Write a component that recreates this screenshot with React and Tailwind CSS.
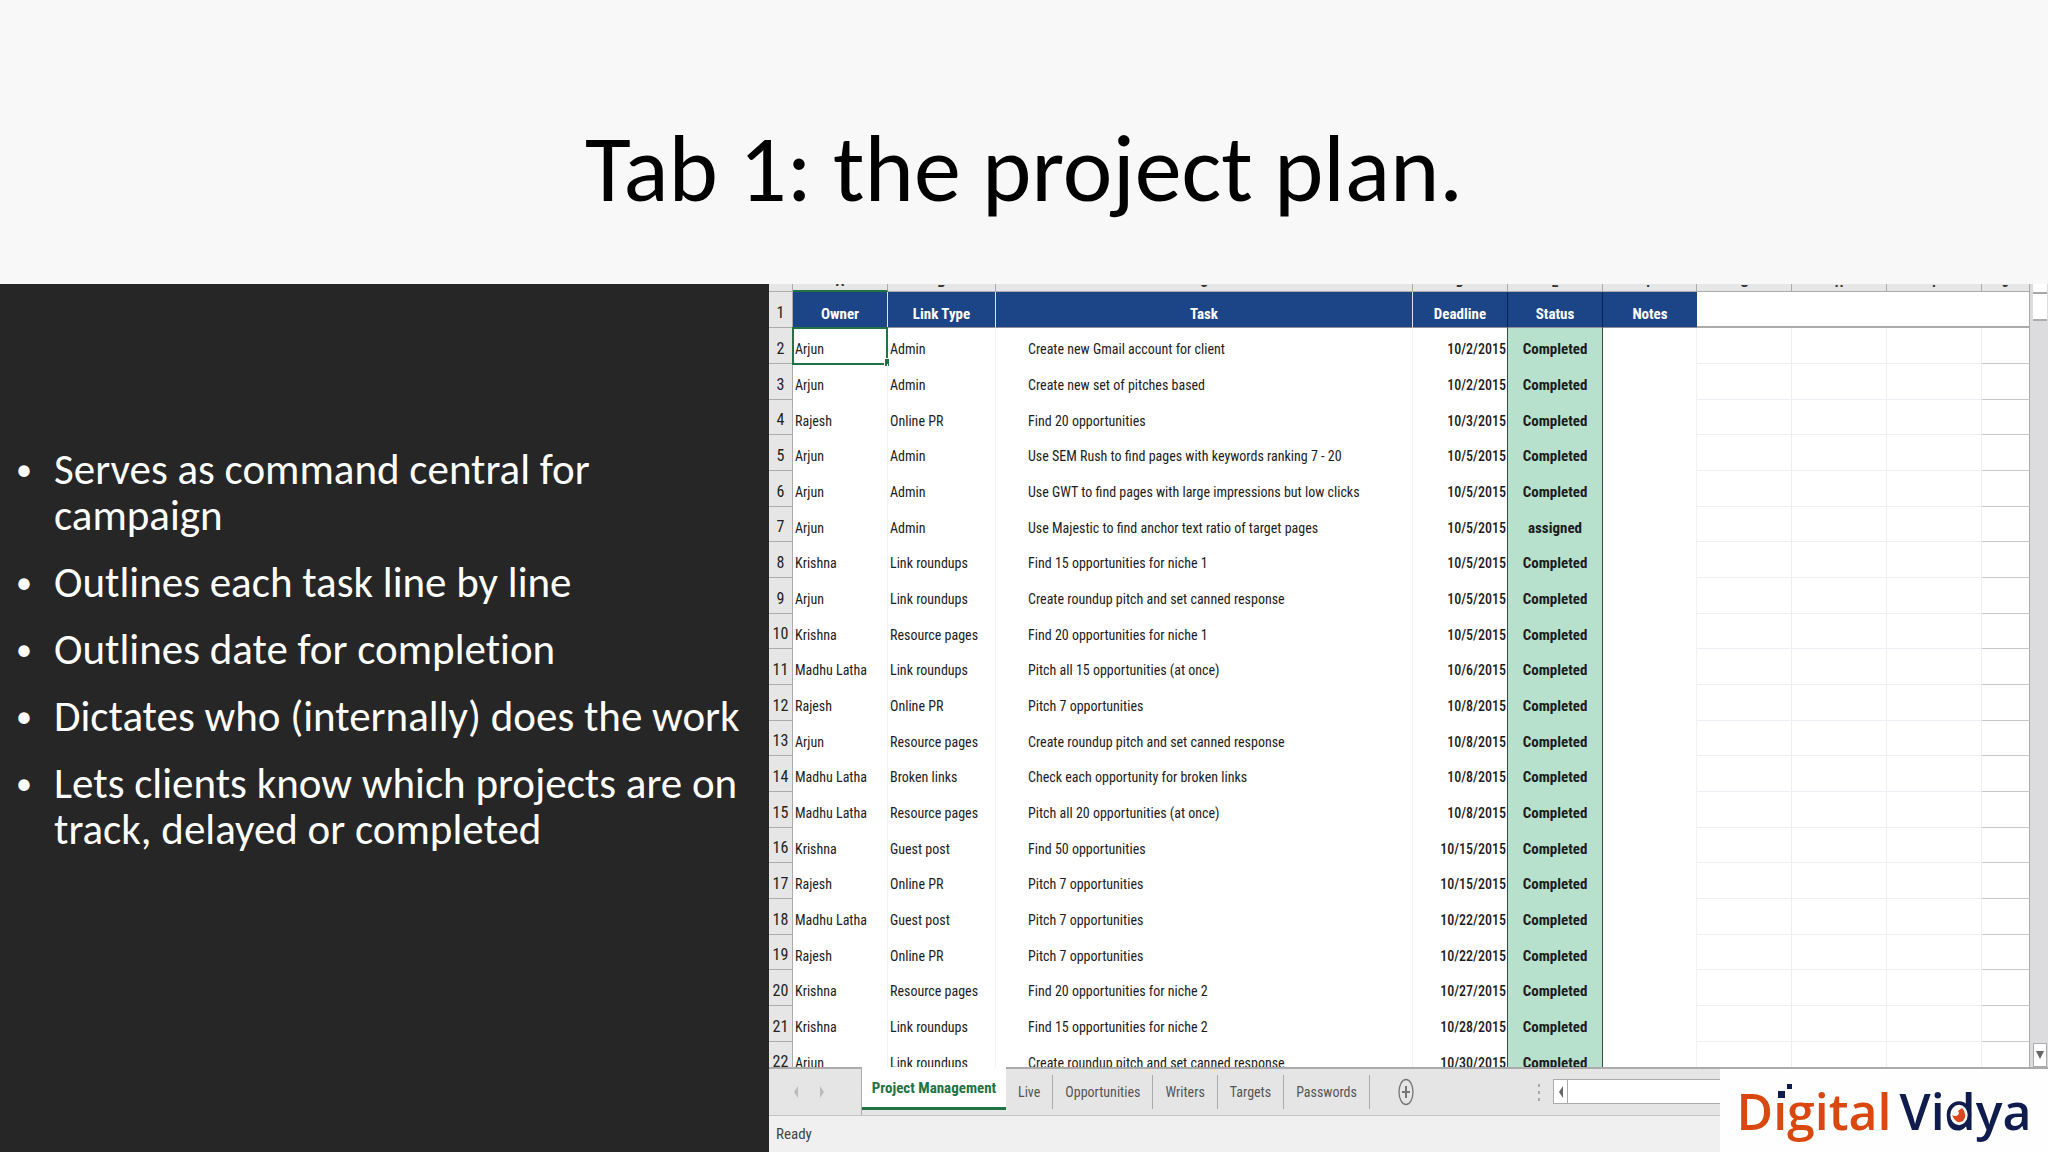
import React from "react";

const LETTERS = ["A", "B", "C", "D", "E", "F", "G", "H", "I", "J"];
const HEADERS = ["Owner", "Link Type", "Task", "Deadline", "Status", "Notes"];

const ROWS = [
  ["Arjun", "Admin", "Create new Gmail account for client", "10/2/2015", "Completed"],
  ["Arjun", "Admin", "Create new set of pitches based", "10/2/2015", "Completed"],
  ["Rajesh", "Online PR", "Find 20 opportunities", "10/3/2015", "Completed"],
  ["Arjun", "Admin", "Use SEM Rush to find pages with keywords ranking 7 - 20", "10/5/2015", "Completed"],
  ["Arjun", "Admin", "Use GWT to find pages with large impressions but low clicks", "10/5/2015", "Completed"],
  ["Arjun", "Admin", "Use Majestic to find anchor text ratio of target pages", "10/5/2015", "assigned"],
  ["Krishna", "Link roundups", "Find 15 opportunities for niche 1", "10/5/2015", "Completed"],
  ["Arjun", "Link roundups", "Create roundup pitch and set canned response", "10/5/2015", "Completed"],
  ["Krishna", "Resource pages", "Find 20 opportunities for niche 1", "10/5/2015", "Completed"],
  ["Madhu Latha", "Link roundups", "Pitch all 15 opportunities (at once)", "10/6/2015", "Completed"],
  ["Rajesh", "Online PR", "Pitch 7 opportunities", "10/8/2015", "Completed"],
  ["Arjun", "Resource pages", "Create roundup pitch and set canned response", "10/8/2015", "Completed"],
  ["Madhu Latha", "Broken links", "Check each opportunity for broken links", "10/8/2015", "Completed"],
  ["Madhu Latha", "Resource pages", "Pitch all 20 opportunities (at once)", "10/8/2015", "Completed"],
  ["Krishna", "Guest post", "Find 50 opportunities", "10/15/2015", "Completed"],
  ["Rajesh", "Online PR", "Pitch 7 opportunities", "10/15/2015", "Completed"],
  ["Madhu Latha", "Guest post", "Pitch 7 opportunities", "10/22/2015", "Completed"],
  ["Rajesh", "Online PR", "Pitch 7 opportunities", "10/22/2015", "Completed"],
  ["Krishna", "Resource pages", "Find 20 opportunities for niche 2", "10/27/2015", "Completed"],
  ["Krishna", "Link roundups", "Find 15 opportunities for niche 2", "10/28/2015", "Completed"],
  ["Arjun", "Link roundups", "Create roundup pitch and set canned response", "10/30/2015", "Completed"],
];

const POINTS = [
  "Serves as command central for campaign",
  "Outlines each task line by line",
  "Outlines date for completion",
  "Dictates who (internally) does the work",
  "Lets clients know which projects are on track, delayed or completed",
];

const TABS = ["Live", "Opportunities", "Writers", "Targets", "Passwords"];

function Sheet() {
  return (
    <table className="w-full table-fixed border-separate border-spacing-0 text-sm leading-5 text-[#1c1c22]">
      <colgroup>
        <col className="w-6" />
        <col className="w-[95px]" />
        <col className="w-[108px]" />
        <col />
        <col className="w-[95px]" />
        <col className="w-[95px]" />
        <col className="w-[94px]" />
        <col className="w-[95px]" />
        <col className="w-[95px]" />
        <col className="w-[95px]" />
        <col className="w-12" />
      </colgroup>
      <thead>
        <tr className="bg-[#e6e6e6]">
          <td className="border-r border-b border-[#ababab] p-0" />
          {LETTERS.map((l) => (
            <th
              key={l}
              scope="col"
              className="border-r border-b border-[#ababab] p-0 font-bold text-[#333] first-of-type:border-b-2 first-of-type:border-b-[#217346]"
            >
              <div className="h-1.5 overflow-hidden leading-[0]">
                <div className="-mt-[3px]">{l}</div>
              </div>
            </th>
          ))}
        </tr>
        <tr className="h-9 text-white">
          <th scope="row" className="border-r border-b border-[#ababab] bg-[#e6e6e6] p-0 pt-1.5 text-base font-normal text-[#222]">1</th>
          {HEADERS.map((h, i) => (
            <th
              key={h}
              scope="col"
              className={
                "border-b border-b-[#8f8f98] bg-[#1c4587] p-0 pt-2 text-[15px] font-bold " +
                (i < 3 ? "border-r border-r-[#dfe3ee]" : i < 5 ? "border-r border-r-[#0c2350]" : "")
              }
            >
              {h}
            </th>
          ))}
          <td colSpan={4} className="border-r border-b-2 border-[#ababab] bg-white p-0" />
        </tr>
      </thead>
      <tbody>
        {ROWS.map(([owner, type, task, date, status], i) => (
          <tr key={i} className="h-9 [&:nth-child(3n)]:h-[35px]">
            <th scope="row" className="border-r border-b border-[#ababab] bg-[#e6e6e6] p-0 pt-1.5 text-base font-normal text-[#222]">
              {i + 2}
            </th>
            <td className="relative border-r border-[#f3f0f6] p-0 pt-1.5 pl-0.5 whitespace-nowrap">
              {owner}
              {i === 0 && (
                <span className="pointer-events-none absolute -inset-px border-2 border-[#217346]">
                  <span className="absolute -right-[3px] -bottom-[3px] h-2 w-[5px] border-t border-l border-white bg-[#217346]" />
                </span>
              )}
            </td>
            <td className="border-r border-[#f3f0f6] p-0 pt-1.5 pl-0.5 whitespace-nowrap">{type}</td>
            <td className="border-r border-[#f3f0f6] p-0 pt-1.5 pl-8 whitespace-nowrap">{task}</td>
            <td className="border-r border-[#3a4a42] p-0 pt-1.5 pr-px text-right font-medium">{date}</td>
            <td className="border-r border-[#3a4a42] bg-[#b7e1cd] p-0 pt-1.5 text-center text-[15px] font-bold">{status}</td>
            <td className="border-r border-[#f3f0f6] p-0" />
            <td className="border-r border-b border-[#efecf3] p-0" />
            <td className="border-r border-b border-[#efecf3] p-0" />
            <td className="border-r border-b border-[#efecf3] p-0" />
            <td className="border-r border-b border-r-[#ababab] border-b-[#c8c8cc] p-0" />
          </tr>
        ))}
      </tbody>
    </table>
  );
}

function Logo() {
  return (
    <div className="flex h-[83px] w-[328px] items-center justify-center gap-2 bg-[#fefefe] font-['Open_Sans',sans-serif] text-[50px] leading-none font-semibold">
      <span className="relative text-[#d9480f]">
        Digital
        <svg className="absolute -top-1 left-[38px] h-5 w-5" viewBox="0 0 20 20" aria-hidden="true">
          <rect x="0" y="4" width="12" height="13" fill="#fefefe" />
          <rect x="3" y="9" width="7" height="7" fill="#0f1c4d" />
          <rect x="12" y="2" width="5" height="5" fill="#0f1c4d" />
        </svg>
      </span>
      <span className="relative text-[#0f1c4d]">
        Vidya
        <svg className="absolute top-[15px] left-[47px] h-7 w-[26px]" viewBox="0 0 26 28" aria-hidden="true">
          <ellipse cx="13" cy="14" rx="10.5" ry="12" fill="#fefefe" stroke="#0f1c4d" strokeWidth="3.6" />
          <path d="M6 14q3 2 6 0l1 -2l-1 -2l4 -3q6 7 1 13q-7 4 -11 -6z" fill="#e0471c" />
        </svg>
      </span>
    </div>
  );
}

export default function App() {
  return (
    <div className="flex min-h-screen flex-col bg-[#f8f8f8]">
      <header className="flex h-[284px] items-end justify-center pb-[58px]">
        <h1 className="font-[Carlito,Calibri,Lato,sans-serif] text-[94px] leading-[115px] text-black">Tab 1: the project plan.</h1>
      </header>
      <main className="flex flex-1">
        <section className="w-3/8 bg-[#262626] pt-[163px] pr-4 pl-4">
          <ul className="flex flex-col gap-[21px] font-[Carlito,Calibri,Lato,sans-serif] text-[43px] leading-[46px] text-white [font-variant-ligatures:none]">
            {POINTS.map((p) => (
              <li key={p} className="flex">
                <span className="w-[38px] shrink-0 text-[32px]" aria-hidden="true">•</span>
                <span>{p}</span>
              </li>
            ))}
          </ul>
        </section>
        <section className="relative flex w-5/8 flex-col border-l border-[#262626] bg-white font-['Roboto_Condensed','Liberation_Sans',sans-serif]">
          <div className="flex h-[785px] overflow-hidden border-b-2 border-[#ababab]">
            <div className="flex-1">
              <Sheet />
            </div>
            <div className="flex w-[18px] flex-col items-end justify-between bg-[#dcdbdd] pr-px">
              <div className="w-3.5">
                <div className="h-2.5 border-b-2 border-[#ababab] bg-white" />
                <div className="h-[27px] border-b-2 border-[#ababab] bg-white" />
              </div>
              <button type="button" aria-label="Scroll down" className="flex h-6 w-3.5 items-center justify-center border border-[#ababab] bg-white">
                <svg className="h-2 w-2" viewBox="0 0 8 8" aria-hidden="true"><path d="M0 0h8L4 8z" fill="#666" /></svg>
              </button>
            </div>
          </div>
          <div className="flex h-[47px] items-start border-b border-[#c3c3c3] bg-[#e6e5e6] text-sm text-[#555]">
            <div className="flex h-[46px] w-[93px] items-center gap-[22px] border-r border-[#ababab] pl-[25px]">
              <button type="button" aria-label="Previous sheet"><svg className="h-3 w-1" viewBox="0 0 4 12"><path d="M4 0v12L0 6z" fill="#bbb" /></svg></button>
              <button type="button" aria-label="Next sheet"><svg className="h-3 w-1" viewBox="0 0 4 12"><path d="M0 0v12L4 6z" fill="#bbb" /></svg></button>
            </div>
            <button type="button" className="-mt-0.5 h-[43px] w-36 border-b-[3px] border-[#217346] bg-white pt-1 text-[15px] font-bold text-[#217346]">Project Management</button>
            <div className="flex pt-1.5">
              {TABS.map((t) => (
                <button type="button" key={t} className="h-[34px] border-r border-[#ababab] px-3">{t}</button>
              ))}
            </div>
            <button type="button" aria-label="New sheet" className="ml-7 self-center">
              <svg className="h-7 w-4" viewBox="0 0 16 28"><ellipse cx="8" cy="14" rx="7" ry="12.5" fill="none" stroke="#777" strokeWidth="1.3" /><path d="M8 8v12M4 14h8" stroke="#777" strokeWidth="2" /></svg>
            </button>
          </div>
          <div className="flex flex-1 items-center bg-[#f1f0f1] pl-[7px] text-[15px] text-[#444]">Ready</div>
          <div className="absolute right-0 bottom-0 flex items-start">
            <svg className="mt-3 mr-3 h-6 w-1" viewBox="0 0 4 24" aria-hidden="true"><path d="M1 3h2v3H1zM1 10h2v3H1zM1 17h2v3H1z" fill="#aaa" /></svg>
            <div className="mt-2.5 flex h-[25px] w-[167px] border border-r-0 border-[#ababab] bg-white">
              <button type="button" aria-label="Scroll left" className="flex w-3.5 items-center justify-center border-r border-[#ababab]">
                <svg className="h-3 w-1" viewBox="0 0 4 12"><path d="M4 0v12L0 6z" fill="#666" /></svg>
              </button>
            </div>
            <Logo />
          </div>
        </section>
      </main>
    </div>
  );
}
